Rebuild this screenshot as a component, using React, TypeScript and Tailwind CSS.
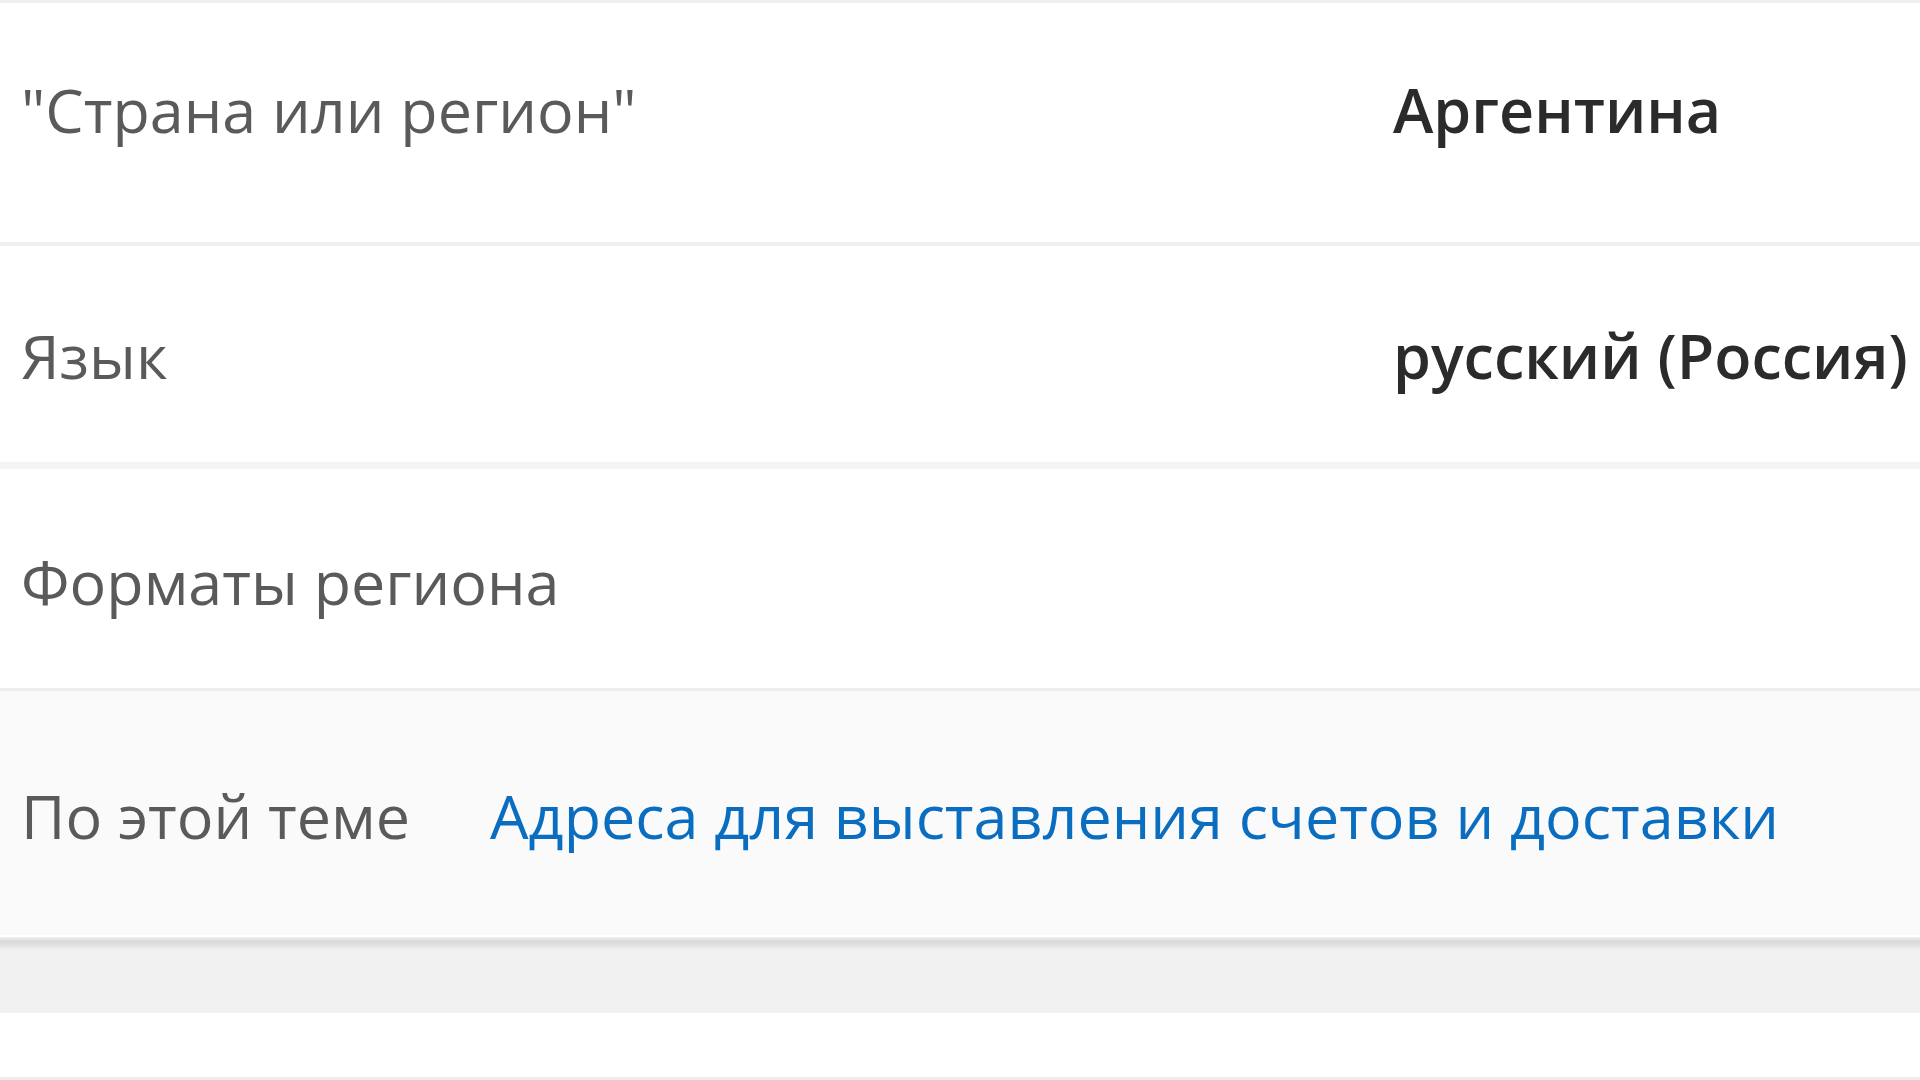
import React from 'react';

interface Row {
  label: string;
  value?: string;
  height: string;
  pad: string;
}

const rows: Row[] = [
  { label: '"Страна или регион"', value: 'Аргентина', height: 'h-[239px]', pad: 'pb-[26px]' },
  { label: 'Язык', value: 'русский (Россия)', height: 'h-[216px]', pad: 'pt-[4px]' },
  { label: 'Форматы региона', height: 'h-[219px]', pad: 'pt-[6px]' },
];

export default function App() {
  return (
    <div className="w-[1920px] h-[1080px] overflow-hidden bg-white font-['Open_Sans','Noto_Sans',sans-serif] text-[61px]">
      <div className="h-[3px] bg-[#efefef]" />

      {rows.map((row, i) => (
        <React.Fragment key={row.label}>
          <div className={`${row.height} ${row.pad} flex items-center`}>
            <div className="w-[1393px] pl-[21px] text-[#5a5a5a]">{row.label}</div>
            {row.value && <div className="font-semibold text-[#2b2b2b]">{row.value}</div>}
          </div>
          {i === 0 && <div className="h-[4px] bg-[#f0f0f0]" />}
          {i === 1 && <div className="h-[7px] bg-[#f4f4f4]" />}
        </React.Fragment>
      ))}

      {/* related topics */}
      <div className="border-t-[3px] border-[#eeeeee] bg-[#fafafa]">
        <div className="h-[244px] pt-[6px] flex items-center">
          <div className="w-[490px] pl-[21px] text-[#5a5a5a]">По этой теме</div>
          <a className="text-[#0a6dc0]">Адреса для выставления счетов и доставки</a>
        </div>
      </div>
      <div className="h-[2px] bg-white" />
      <div className="h-[12px] bg-[linear-gradient(to_bottom,#f2f2f2,#d9d9d9_35%,#e4e4e4_75%,#f0f0f0)]" />
      <div className="h-[64px] bg-[#f0f0f0]" />
      <div className="h-[64px] bg-white" />
      <div className="h-[3px] bg-[#ececec]" />
    </div>
  );
}
